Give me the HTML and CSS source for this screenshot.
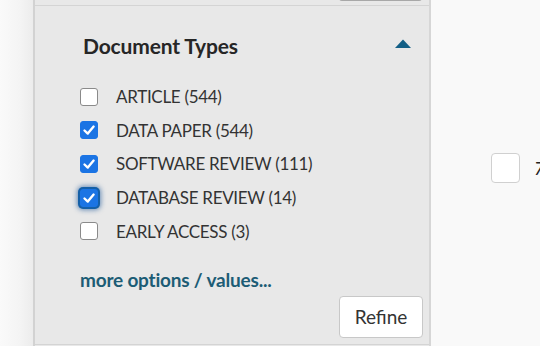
FILE: index.html
```html
<!DOCTYPE html>
<html>
<head>
<meta name="viewport" content="width=device-width, initial-scale=1.0"/>
<link rel="stylesheet" href="styles.css">
</head>
<body>
<div class="page">
    <div class="gutter"></div>
    <div class="sidebar">
        <div class="prev">
            <div class="prevbtn"></div>
        </div>
        <div class="facet">
            <div class="facet-head">
                <h3>Document Types</h3>
                <svg class="caret" width="16" height="9" viewBox="0 0 16 9"><polygon points="0,9 8,0.5 16,9" fill="#135f86"/></svg>
            </div>
            <ul class="opts">
                <li><span class="cb"></span>ARTICLE (544)</li>
                <li><span class="cb on"><svg viewBox="0 0 18 18" width="18" height="18"><path d="M4.5 9.5 L7.8 12.6 L13.6 5.6" fill="none" stroke="#fff" stroke-width="2.4" stroke-linecap="round" stroke-linejoin="round"/></svg></span>DATA PAPER (544)</li>
                <li><span class="cb on"><svg viewBox="0 0 18 18" width="18" height="18"><path d="M4.5 9.5 L7.8 12.6 L13.6 5.6" fill="none" stroke="#fff" stroke-width="2.4" stroke-linecap="round" stroke-linejoin="round"/></svg></span>SOFTWARE REVIEW (111)</li>
                <li><span class="cb on focus"><svg viewBox="0 0 18 18" width="18" height="18"><path d="M4.5 9.5 L7.8 12.6 L13.6 5.6" fill="none" stroke="#fff" stroke-width="2.4" stroke-linecap="round" stroke-linejoin="round"/></svg></span>DATABASE REVIEW (14)</li>
                <li><span class="cb"></span>EARLY ACCESS (3)</li>
            </ul>
            <a class="more" href="#">more options / values...</a>
            <div class="actions">
                <button class="refine" type="button">Refine</button>
            </div>
        </div>
    </div>
    <div class="results">
        <div class="row"><span class="rcb"></span><span class="rnum">7</span></div>
    </div>
</div>
</body>
</html>
```

FILE: styles.css
```css
html, body {
    margin: 0;
    padding: 0;
    height: 100%;
    overflow: hidden;
    background: #f9f9f9;
    font-family: Lato, "Open Sans", sans-serif;
    color: #333;
}

.page {
    display: flex;
    height: 346px;
}

.gutter {
    flex: none;
    width: 33px;
    background: linear-gradient(to right, #fafafa 0%, #f4f4f4 60%, #ececec 100%);
}

.sidebar {
    flex: none;
    width: 394px;
    background: #e8e8e8;
    border-left: 2px solid #d2d2d2;
    border-right: 2px solid #d6d6d6;
    display: flex;
    flex-direction: column;
}

.prev {
    height: 5px;
    border-bottom: 1px solid #d4d4d4;
    display: flex;
    justify-content: flex-end;
    align-items: flex-end;
    padding-right: 7px;
    overflow: hidden;
}

.prevbtn {
    width: 83px;
    height: 20px;
    margin-bottom: 4px;
    background: #ececec;
    border-bottom: 2px solid #a8a8a8;
    border-radius: 3px;
}

.facet {
    flex: 1;
    padding: 27px 6px 0 45px;
    border-bottom: 1px solid #d4d4d4;
    margin-bottom: 1px;
}

.facet-head {
    display: flex;
    justify-content: space-between;
    align-items: center;
    padding-left: 3px;
    padding-right: 12px;
}

.facet-head h3 {
    margin: 0;
    font-size: 21px;
    font-weight: 700;
    color: #262626;
    letter-spacing: -0.15px;
}

.caret {
    margin-top: -4px;
}

.opts {
    list-style: none;
    margin: 22px 0 0 0;
    padding: 0;
}

.opts li {
    display: flex;
    align-items: center;
    height: 33.6px;
    font-size: 17px;
    letter-spacing: -0.3px;
    color: #333;
}

.cb {
    flex: none;
    width: 16px;
    height: 16px;
    border: 1px solid #8a8a8a;
    border-radius: 3px;
    background: #fff;
    margin-right: 18px;
    display: flex;
    align-items: center;
    justify-content: center;
}

.cb.on {
    background: #1b74e4;
    border-color: #1b74e4;
}

.cb.on svg {
    flex: none;
}

.cb.focus {
    box-shadow: 0 0 0 2px #1560a8, 0 0 5px 3px rgba(20, 80, 150, 0.6);
}

.more {
    display: block;
    margin-top: 20px;
    font-size: 19px;
    font-weight: 700;
    color: #1c5c75;
    text-decoration: none;
    letter-spacing: -0.2px;
}

.actions {
    display: flex;
    justify-content: flex-end;
    margin-top: 5px;
}

.refine {
    width: 84px;
    height: 42px;
    background: #fff;
    border: 1px solid #c8c8c8;
    border-radius: 4px;
    font-family: Lato, "Open Sans", sans-serif;
    font-size: 19px;
    color: #333;
}

.results {
    flex: 1;
    padding: 153px 0 0 60px;
}

.row {
    display: flex;
    align-items: center;
}

.rcb {
    flex: none;
    width: 27px;
    height: 28px;
    background: #fff;
    border: 1px solid #d0d0d0;
    border-radius: 4px;
    margin-right: 14px;
}

.rnum {
    font-size: 18px;
    font-style: italic;
    color: #222;
}
```
